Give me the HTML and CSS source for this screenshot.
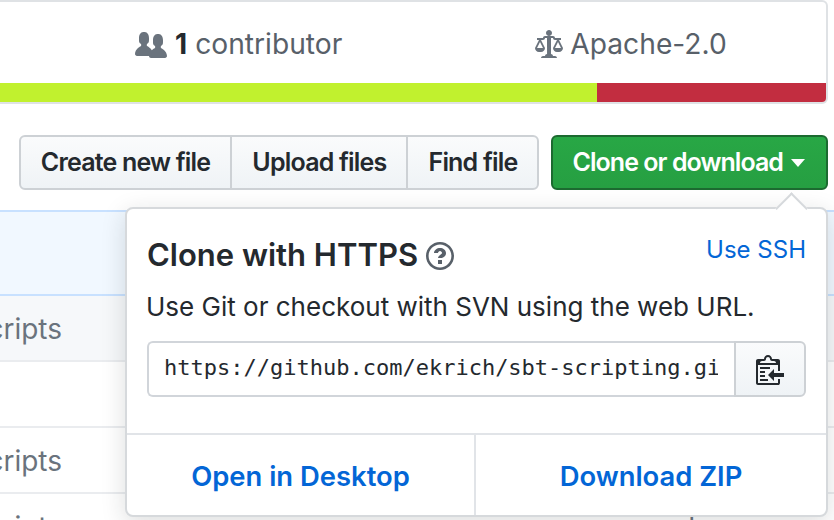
FILE: index.html
```html
<!DOCTYPE html>
<html lang="en">
<head>
<meta charset="utf-8">
<title>sbt-scripting</title>
<link rel="stylesheet" href="styles.css">
</head>
<body>
<div class="page">
  <section class="summary">
    <div class="stats">
      <div class="stat stat-people">
        <svg class="stat-icon" width="32" height="28" viewBox="0 0 16 14"><path fill="#6a737d" d="M16 12.999c0 .439-.45 1-1 1H7.995c-.539 0-.994-.447-.995-.999H1c-.54 0-1-.561-1-1 0-2.634 3-4 3-4s.229-.409 0-1c-.841-.621-1.058-.59-1-3 .058-2.419 1.367-3 2.5-3s2.442.58 2.5 3c.058 2.41-.159 2.379-1 3-.229.59 0 1 0 1s1.549.711 2.42 2.088C9.196 9.369 10 8.999 10 8.999s.229-.409 0-1c-.841-.62-1.058-.59-1-3 .058-2.419 1.367-3 2.5-3s2.437.581 2.495 3c.059 2.41-.158 2.38-1 3-.229.59 0 1 0 1s3.005 1.366 3.005 4z"/></svg>
        <strong class="count">1</strong> contributor
      </div>
      <div class="stat stat-license">
        <svg class="stat-icon" width="28" height="32" viewBox="0 0 14 16"><path fill="#6a737d" fill-rule="evenodd" d="M7 4c-.83 0-1.5-.67-1.5-1.5S6.17 1 7 1s1.5.67 1.5 1.5S7.83 4 7 4zm7 6c0 1.11-.89 2-2 2h-1c-1.11 0-2-.89-2-2l2-4h-1c-.55 0-1-.45-1-1H8v8c.42 0 1 .45 1 1h1c.42 0 1 .45 1 1H3c0-.55.58-1 1-1h1c0-.55.58-1 1-1h.03L6 5H5c0 .55-.45 1-1 1H3l2 4c0 1.11-.89 2-2 2H2c-1.11 0-2-.89-2-2l2-4H1V5h3c0-.55.45-1 1-1h4c.55 0 1 .45 1 1h3v1h-1l2 4zM2.5 7L1 10h3L2.5 7zM13 10l-1.5-3L10 10h3z"/></svg>
        Apache-2.0
      </div>
    </div>
    <div class="langbar"><span class="lang lang-green"></span><span class="lang lang-red"></span></div>
  </section>

  <div class="actions">
    <div class="btn-group">
      <a class="btn">Create new file</a>
      <a class="btn">Upload files</a>
      <a class="btn">Find file</a>
    </div>
    <a class="btn-primary">Clone or download<span class="caret"></span></a>
  </div>

  <div class="files">
    <div class="tease"></div>
    <div class="row row-alt"><span class="row-name">scripts</span></div>
    <div class="row"></div>
    <div class="row"><span class="row-name">scripts</span></div>
    <div class="row"><span class="row-name">scripts</span><span class="row-age">d</span></div>
  </div>

  <div class="popover">
    <div class="pop-body">
      <div class="pop-head">
        <h4 class="pop-title">Clone with HTTPS
          <svg class="help" width="28" height="32" viewBox="0 0 14 16"><path fill="#586069" fill-rule="evenodd" d="M6 10h2v2H6v-2zm4-3.5C10 8.64 8 8.75 8 9H6c0-1.13 2-1.88 2-2.5 0-.5-.5-1-1-1s-1 .5-1 1H4C4 5.04 5.5 4 7 4s3 1 3 2.5zM7 2.3c3.14 0 5.7 2.56 5.7 5.7S10.140 13.700 7 13.700 1.300 11.140 1.300 8 3.860 2.300 7 2.300zM7 1C3.140 1 0 4.140 0 8s3.140 7 7 7 7-3.140 7-7-3.140-7-7-7z"/></svg>
        </h4>
        <a class="use-ssh">Use SSH</a>
      </div>
      <p class="pop-desc">Use Git or checkout with SVN using the web URL.</p>
      <div class="clone-field">
        <div class="clone-url"><span class="clone-text">https://github.com/ekrich/sbt-scripting.git</span></div>
        <button class="clip" type="button" aria-label="Copy">
          <svg width="28" height="32" viewBox="0 0 14 16"><path fill="#24292e" fill-rule="evenodd" d="M2 13h4v1H2v-1zm5-6H2v1h5V7zm2 3V8l-3 3 3 3v-2h5v-2H9zM4.500 9H2v1h2.500V9zM2 12h2.500v-1H2v1zm9 1h1v2c-.020.280-.110.520-.300.700-.190.180-.420.280-.700.300H1c-.550 0-1-.450-1-1V4c0-.550.450-1 1-1h3c0-1.110.890-2 2-2 1.110 0 2 .890 2 2h3c.550 0 1 .450 1 1v5h-1V6H1v9h10v-2zM2 5h8c0-.550-.450-1-1-1H8c-.550 0-1-.450-1-1s-.450-1-1-1-1 .450-1 1-.450 1-1 1H3c-.550 0-1 .450-1 1z"/></svg>
        </button>
      </div>
    </div>
    <div class="pop-foot">
      <a class="foot-link">Open in Desktop</a>
      <a class="foot-link">Download ZIP</a>
    </div>
  </div>
</div>
</body>
</html>
```

FILE: styles.css
```css
* { box-sizing: border-box; }
html, body { margin: 0; padding: 0; background: #fff; }
body { font-family: Inter, "Liberation Sans", sans-serif; color: #24292e; }
.page { position: relative; width: 834px; height: 520px; overflow: hidden; }

.summary {
  margin-left: -12px;
  width: 840px;
  height: 104px;
  border: 2px solid #dfe2e5;
  border-left: 0;
  border-radius: 0 6px 6px 0;
  overflow: hidden;
  display: flex;
  flex-direction: column;
  justify-content: space-between;
}
.stats { flex: 1; position: relative; display: flex; }
.stat {
  font-size: 28.2px;
  line-height: 32px;
  color: #586069;
  display: flex;
  align-items: center;
  gap: 8px;
  padding-top: 26px;
  height: 58px;
  white-space: nowrap;
}
.stat-people { margin-left: 147px; }
.stat-license { margin-left: 193px; gap: 7px; }
.count { color: #24292e; font-weight: 700; }
.langbar { display: flex; height: 19px; }
.lang-green { width: 609px; background: #c1f12e; }
.lang-red { flex: 1; background: #c22d40; }

.actions {
  display: flex;
  justify-content: flex-end;
  margin-top: 31px;
  padding-right: 6px;
  gap: 12px;
}
.btn-group { display: flex; }
.btn {
  height: 55px;
  padding: 0 20px 2px;
  display: flex;
  align-items: center;
  font-size: 25px;
  letter-spacing: -0.8px;
  font-weight: 600;
  background: linear-gradient(#fafbfc, #eff3f6);
  border: 2px solid #cdd1d5;
  margin-left: -2px;
  white-space: nowrap;
}
.btn:first-child { border-radius: 6px 0 0 6px; margin-left: 0; }
.btn:last-child { border-radius: 0 6px 6px 0; }
.btn-primary {
  height: 55px;
  padding: 0 21px 2px 19px;
  display: flex;
  align-items: center;
  gap: 8px;
  font-size: 25px;
  letter-spacing: -0.95px;
  font-weight: 600;
  color: #fff;
  background: linear-gradient(#28a745, #269f42);
  border: 2px solid #1c6a30;
  border-radius: 6px;
  white-space: nowrap;
}
.caret {
  width: 0;
  height: 0;
  margin-top: 2px;
  border: 7.5px solid transparent;
  border-top: 8px solid #fff;
  border-bottom: 0;
}

.files { margin-top: 20px; margin-left: -12px; }
.tease {
  height: 86px;
  background: #f1f8ff;
  border-top: 2px solid #c8e1ff;
  border-bottom: 2px solid #c8e1ff;
}
.row {
  height: 66px;
  border-bottom: 2px solid #eaecef;
  position: relative;
  font-size: 28px;
  color: #6a737d;
}
.row-alt { background: #f6f8fa; }
.row-name { position: absolute; right: 772px; top: 16px; }
.row-age { position: absolute; left: 690px; top: 16px; }

.popover {
  position: absolute;
  left: 125px;
  top: 207px;
  width: 703px;
  height: 310px;
  background: #fff;
  border: 2px solid #d6d9dc;
  border-radius: 8px;
  box-shadow: 0 6px 24px rgba(27, 31, 35, 0.15);
  display: flex;
  flex-direction: column;
}
.popover::before {
  content: "";
  position: absolute;
  top: -12px;
  left: 653px;
  width: 21px;
  height: 21px;
  background: #fff;
  border-top: 2px solid #d6d9dc;
  border-left: 2px solid #d6d9dc;
  transform: rotate(45deg);
}
.pop-body { flex: 1; padding: 27px 20px 0; position: relative; }
.pop-head { display: flex; justify-content: space-between; align-items: flex-start; }
.pop-title {
  margin: 0;
  font-size: 31px;
  line-height: 38px;
  font-weight: 600;
  display: flex;
  align-items: center;
  gap: 8px;
}
.help { margin-top: 2px; }
.use-ssh { font-size: 24px; line-height: 28px; color: #0366d6; }
.pop-desc { margin: 17px 0 0 -1px; font-size: 26px; line-height: 32px; }
.clone-field { display: flex; margin-top: 18px; height: 56px; }
.clone-url {
  flex: 1;
  min-width: 0;
  font-family: "DejaVu Sans Mono", monospace;
  font-size: 22px;
  line-height: 50px;
  padding-left: 15px;
  padding-right: 16px;
  border: 2px solid #d1d5da;
  border-right: 0;
  border-radius: 6px 0 0 6px;
}
.clone-text { display: block; overflow: hidden; white-space: nowrap; }
.clip {
  width: 72px;
  padding: 0;
  display: flex;
  align-items: center;
  justify-content: center;
  background: linear-gradient(#fafbfc, #eff3f6);
  border: 2px solid #cdd1d5;
  border-radius: 0 6px 6px 0;
}
.pop-foot { display: flex; height: 82px; border-top: 2px solid #e1e4e8; }
.foot-link {
  display: flex;
  align-items: center;
  justify-content: center;
  padding-top: 2px;
  font-size: 27.4px;
  font-weight: 600;
  color: #0366d6;
}
.foot-link:first-child { width: 349px; border-right: 2px solid #e1e4e8; }
.foot-link:last-child { flex: 1; }
```
